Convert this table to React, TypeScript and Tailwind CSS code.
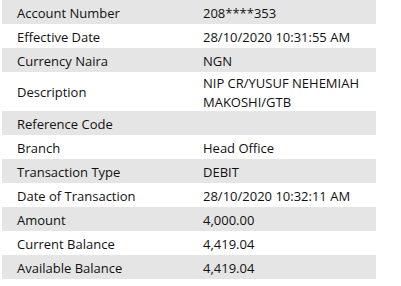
import React from "react";

const rows: { label: string; value: React.ReactNode; tall?: boolean }[] = [
  { label: "Account Number", value: "208****353" },
  { label: "Effective Date", value: "28/10/2020 10:31:55 AM" },
  { label: "Currency Naira", value: "NGN" },
  {
    label: "Description",
    value: (
      <>
        <span className="block">NIP CR/YUSUF NEHEMIAH</span>
        <span className="block">MAKOSHI/GTB</span>
      </>
    ),
    tall: true,
  },
  { label: "Reference Code", value: "" },
  { label: "Branch", value: "Head Office" },
  { label: "Transaction Type", value: "DEBIT" },
  { label: "Date of Transaction", value: "28/10/2020 10:32:11 AM" },
  { label: "Amount", value: "4,000.00" },
  { label: "Current Balance", value: "4,419.04" },
  { label: "Available Balance", value: "4,419.04" },
];

export default function App() {
  return (
    <div
      className="w-[401px] h-[286px] bg-white text-[#111] text-[13px]"
      style={{ fontFamily: '"Open Sans", "Noto Sans", sans-serif' }}
    >
      <div className="ml-[2px] w-[374px] flex flex-col">
        {rows.map((r, i) => (
          <div
            key={r.label}
            className={`flex items-center ${r.tall ? "h-[39px]" : "h-[24px]"} ${
              i % 2 === 0 ? "bg-[#e5e5e5]" : "bg-white"
            }`}
          >
            <div className="w-[200px] pl-[15px] pt-[2px] leading-[19px]">{r.label}</div>
            <div className="flex-1 pl-[1px] pt-[2px] leading-[19px]">{r.value}</div>
          </div>
        ))}
      </div>
    </div>
  );
}
